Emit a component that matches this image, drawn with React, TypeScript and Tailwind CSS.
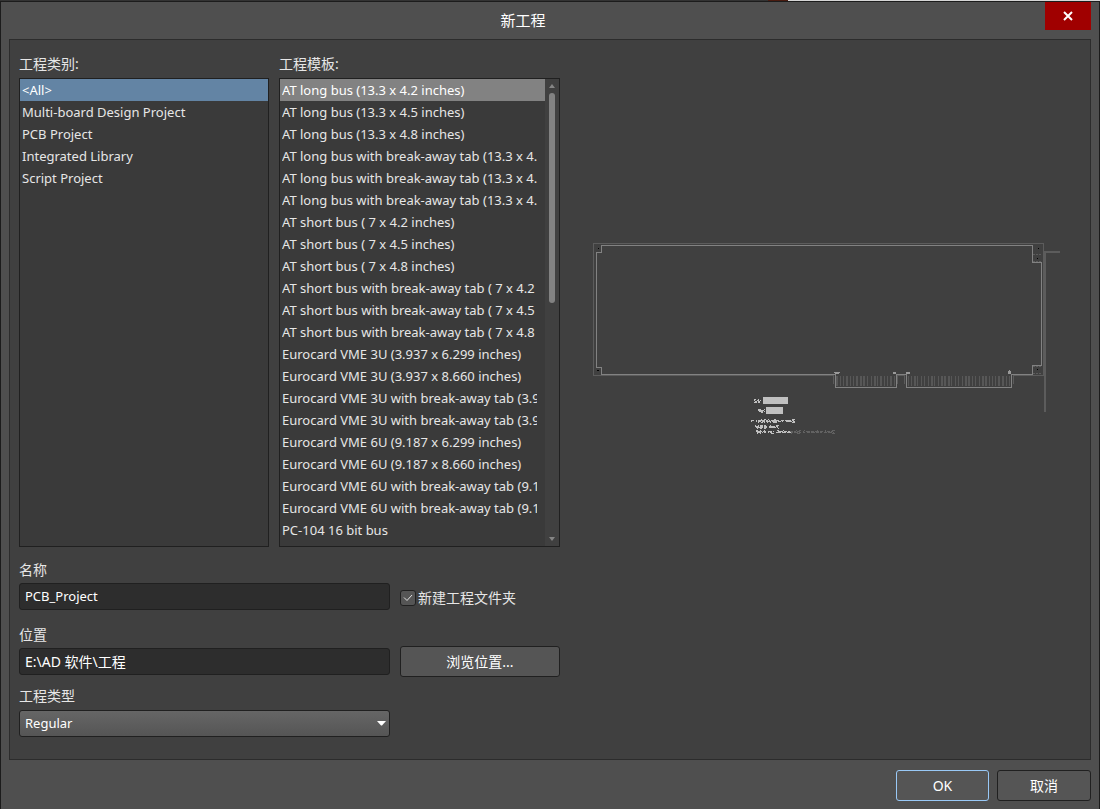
import { useState } from "react";

const CATEGORIES = [
    "<All>",
    "Multi-board Design Project",
    "PCB Project",
    "Integrated Library",
    "Script Project",
];

const TEMPLATES = [
    "AT long bus (13.3 x 4.2 inches)",
    "AT long bus (13.3 x 4.5 inches)",
    "AT long bus (13.3 x 4.8 inches)",
    "AT long bus with break-away tab (13.3 x 4.2 inches)",
    "AT long bus with break-away tab (13.3 x 4.5 inches)",
    "AT long bus with break-away tab (13.3 x 4.8 inches)",
    "AT short bus ( 7 x 4.2 inches)",
    "AT short bus ( 7 x 4.5 inches)",
    "AT short bus ( 7 x 4.8 inches)",
    "AT short bus with break-away tab ( 7 x 4.2 inches)",
    "AT short bus with break-away tab ( 7 x 4.5 inches)",
    "AT short bus with break-away tab ( 7 x 4.8 inches)",
    "Eurocard VME 3U (3.937 x 6.299 inches)",
    "Eurocard VME 3U (3.937 x 8.660 inches)",
    "Eurocard VME 3U with break-away tab (3.937 x 6.299 inches)",
    "Eurocard VME 3U with break-away tab (3.937 x 8.660 inches)",
    "Eurocard VME 6U (9.187 x 6.299 inches)",
    "Eurocard VME 6U (9.187 x 8.660 inches)",
    "Eurocard VME 6U with break-away tab (9.187 x 6.299 inches)",
    "Eurocard VME 6U with break-away tab (9.187 x 8.660 inches)",
    "PC-104 16 bit bus",
];

// [x, width] of every edge connector pin
const PINS = [
    [243, 2], [247, 1], [250, 1], [253, 2], [257, 1], [260, 1], [263, 2], [267, 2],
    [270, 2], [274, 1], [278, 1], [281, 2], [284, 1], [287, 2], [291, 1], [294, 1],
    [297, 2], [301, 1],
    [315, 1], [318, 1], [321, 2], [324, 1], [328, 1], [331, 1], [335, 1], [338, 2],
    [341, 1], [345, 1], [348, 2], [351, 2], [355, 2], [358, 1], [362, 1], [365, 1],
    [369, 1], [372, 2], [375, 2], [379, 1], [382, 1], [386, 1], [389, 2], [392, 2],
    [396, 1], [399, 1], [402, 1], [405, 2], [409, 2], [413, 1], [416, 1],
];

interface IListProps {
    label: string;
    items: string[];
    selected: string;
    selectedClass: string;
    onSelect: (item: string) => void;
}

function List({ label, items, selected, selectedClass, onSelect }: IListProps) {
    return (
        <ul aria-label={label} className="flex-1 min-w-0 overflow-hidden pb-[5px]">
            {items.map((item) => (
                <li key={item}>
                    <button
                        type="button"
                        onClick={() => onSelect(item)}
                        className={`block w-full h-[22px] pl-[2px] pr-2 text-left text-[13px] leading-[22px] ${
                            item === selected ? selectedClass : "text-[#e6e6e6]"
                        }`}
                    >
                        <span className="block whitespace-nowrap overflow-hidden">
                            {item}
                        </span>
                    </button>
                </li>
            ))}
        </ul>
    );
}

function BoardPreview() {
    return (
        <svg
            viewBox="0 0 468 192"
            className="w-[468px] max-w-full"
            fill="none"
            shapeRendering="crispEdges"
            aria-label="PCB"
        >
            <g stroke="#5c5c5c">
                <path d="M240.5 141V132.5H0.5V0.5H450.5V132.5H420.5V141M304.5 141V132.5H311.5V141" />
                <path d="M452 9V169M451 9H467" strokeWidth="2" />
                <path
                    d="M440 11.5H449M440 18.5H449M440 123.5H449M440 130.5H449"
                    strokeDasharray="2 1"
                />
            </g>
            {PINS.map(([x, width]) => (
                <rect key={x} x={x} y="133" width={width} height="10" fill="#575757" />
            ))}
            <path
                stroke="#828282"
                d="M8.5 2.5H439.5V19.5H448.5V122.5H439.5V131.5H418.5V144.5H313.5V131.5H303.5V144.5H242.5V131.5H8.5V124.5H3.5V9.5H8.5Z"
            />
            <g fill="#000">
                <rect x="5" y="5" width="1" height="1" />
                <rect x="4" y="127" width="2" height="1" />
                <rect x="445" y="5" width="1" height="1" />
                <rect x="444" y="15" width="1" height="1" />
                <rect x="444" y="126" width="1" height="1" />
            </g>
            <g fill="#999">
                <path d="M241 129h6v1h-1v1h-4v-1h-1zM300 129h3v2h-3zM313 129h4v2h-4zM415 128h1v-1h1v1h1v3h-3z" />
            </g>
            <g fill="#c0c0c0">
                <rect x="170" y="154" width="25" height="7" />
                <rect x="173" y="164" width="17" height="7" />
            </g>
            <g stroke="#c0c0c0">
                <path d="M161 156.5h2m2 0h1M161 157.5h1m2 0h2m1 0h1M162 158.5h2m1 0h2M161 159.5h3m1 0h2" />
                <path d="M165 166.5h3m3 0h1M165 167.5h6M166 168.5h4m1 0h1M168 169.5h2" />
                <path d="M168 176.5h1m2 0h2m2 0h1m5 0h2m16 0h3" />
                <path d="M158 177.5h3m2 0h1m1 0h7m1 0h2m1 0h1m1 0h8m2 0h3m1 0h6m1 0h2" />
                <path d="M158 178.5h1m4 0h1m1 0h3m1 0h3m1 0h5m1 0h5m1 0h3m1 0h1m3 0h6m1 0h2" />
                <path d="M165 179.5h1m2 0h2m1 0h1m2 0h1m2 0h1m2 0h4m15 0h3" />
                <path d="M162 182.5h1m2 0h1m1 0h3m1 0h2m4 0h1m5 0h3" />
                <path d="M162 183.5h4m1 0h3m1 0h3m2 0h6m1 0h2M163 184.5h7m1 0h3m2 0h7m1 0h1M164 185.5h1m2 0h2m2 0h2m12 0h1" />
                <path d="M163 187.5h2m2 0h1m3 0h1m12 0h2m4 0h1" />
                <path d="M163 188.5h6m1 0h3m2 0h4m1 0h1m4 0h5m1 0h3m1 0h3" />
                <path d="M164 189.5h4m1 0h1m1 0h2m2 0h1m1 0h2m4 0h5m1 0h4m1 0h4M164 190.5h1m2 0h1m10 0h3" />
            </g>
            <g stroke="#626262">
                <path d="M203 187.5h1m2 0h2m3 0h1m12 0h1m7 0h1m6 0h3" />
                <path d="M197 188.5h3m1 0h2m1 0h3m3 0h1m2 0h4m1 0h3m1 0h4m1 0h3m2 0h1m1 0h3m1 0h2" />
                <path d="M198 189.5h2m1 0h4m1 0h2m2 0h2m2 0h3m1 0h4m1 0h3m1 0h2m2 0h3m1 0h4m1 0h1" />
                <path d="M198 190.5h1m5 0h3m32 0h3" />
            </g>
        </svg>
    );
}

export default function App() {
    const [category, setCategory] = useState(CATEGORIES[0]);
    const [template, setTemplate] = useState(TEMPLATES[0]);
    const [name, setName] = useState("PCB_Project");
    const [location, setLocation] = useState("E:\\AD 软件\\工程");
    const [createFolder, setCreateFolder] = useState(true);

    const field =
        "w-full h-[27px] px-[5px] pb-[2px] rounded-[3px] border border-[#202020] bg-[#2d2d2d] text-white outline-none";
    const button =
        "h-[31px] rounded-[3px] border bg-[#555555] text-sm text-white";

    return (
        <div className="min-h-screen flex flex-col bg-[#4f4f4f] text-[#e6e6e6] text-[14px] leading-5 font-['Noto_Sans','Noto_Sans_CJK_SC',sans-serif]">
            <div className="h-px flex bg-[#333333]">
                <div className="ml-auto w-[20px] bg-[#4a1c10]" />
                <div className="w-[312px] bg-[#d6d6d6]" />
            </div>
            <div className="flex-1 flex flex-col border-t border-x border-[#1c1c1c]">
                <header className="flex items-start h-[37px] pr-2">
                    <h1 className="flex-1 pt-2 text-center text-[15px] text-white">新工程</h1>
                    <button
                        type="button"
                        aria-label="关闭"
                        className="w-[46px] h-7 flex items-center justify-center bg-[#a00000]"
                    >
                        <svg width="10" height="10" viewBox="0 0 10 10" stroke="#fff" strokeWidth="2">
                            <path d="M1 1L9 9M9 1L1 9" />
                        </svg>
                    </button>
                </header>

                <main className="flex mx-2 pt-[14px] pb-[22px] pl-[9px] border border-[#2c2c2c] bg-[#404040]">
                    <div className="w-[541px] shrink-0">
                        <div className="grid grid-cols-[250px_1fr] gap-x-[10px]">
                            <section>
                                <h2>工程类别:</h2>
                                <div className="mt-1 flex h-[469px] border border-[#202020] bg-[#3a3a3a]">
                                    <List
                                        label="工程类别"
                                        items={CATEGORIES}
                                        selected={category}
                                        selectedClass="bg-[#6384a4] text-white"
                                        onSelect={setCategory}
                                    />
                                </div>
                            </section>
                            <section className="min-w-0">
                                <h2>工程模板:</h2>
                                <div className="mt-1 flex border border-[#202020] bg-[#3a3a3a]">
                                    <List
                                        label="工程模板"
                                        items={TEMPLATES}
                                        selected={template}
                                        selectedClass="bg-[#828282] text-white"
                                        onSelect={setTemplate}
                                    />
                                    <div className="w-[14px] flex flex-col items-center bg-[#404040] py-[5px]">
                                        <svg width="6" height="4" viewBox="0 0 6 4" fill="#858585">
                                            <path d="M0 4L3 0L6 4Z" />
                                        </svg>
                                        <div className="mt-[5px] w-[6px] h-[210px] rounded-full bg-[#828282]" />
                                        <svg className="mt-auto" width="6" height="4" viewBox="0 0 6 4" fill="#858585">
                                            <path d="M0 0L3 4L6 0Z" />
                                        </svg>
                                    </div>
                                </div>
                            </section>
                        </div>

                        <div className="mt-[13px] grid grid-cols-[371px_1fr] gap-x-[10px] items-end">
                            <div>
                                <label htmlFor="name" className="block mb-[3px]">名称</label>
                                <input
                                    id="name"
                                    className={`${field} text-[13px]`}
                                    value={name}
                                    onChange={(e) => setName(e.target.value)}
                                />
                            </div>
                            <label className="flex items-center gap-[2px] mb-[2px]">
                                <span className="relative flex w-4 h-4">
                                    <input
                                        type="checkbox"
                                        checked={createFolder}
                                        onChange={(e) => setCreateFolder(e.target.checked)}
                                        className="appearance-none w-4 h-4 rounded-[3px] border border-[#202020] bg-[#555555]"
                                    />
                                    {createFolder && (
                                        <svg
                                            className="absolute inset-0 pointer-events-none"
                                            width="16"
                                            height="16"
                                            viewBox="0 0 16 16"
                                            fill="none"
                                            stroke="#e0e0e0"
                                        >
                                            <path d="M4 7.5L7 10.5L12 5" />
                                        </svg>
                                    )}
                                </span>
                                新建工程文件夹
                            </label>
                        </div>

                        <div className="mt-[15px] grid grid-cols-[371px_1fr] gap-x-[10px] items-end">
                            <div>
                                <label htmlFor="location" className="block mb-[3px]">位置</label>
                                <input
                                    id="location"
                                    className={`${field} text-sm`}
                                    value={location}
                                    onChange={(e) => setLocation(e.target.value)}
                                />
                            </div>
                            <button type="button" className={`${button} border-[#202020] -mb-[2px]`}>
                                浏览位置...
                            </button>
                        </div>

                        <div className="mt-[11px] w-[371px]">
                            <label htmlFor="type" className="block mb-1">工程类型</label>
                            <div className="relative">
                                <select
                                    id="type"
                                    className="appearance-none block w-full h-[27px] px-[5px] pb-[2px] rounded-[3px] border border-[#202020] bg-linear-to-b from-[#666666] to-[#555555] text-[13px] text-white"
                                >
                                    <option>Regular</option>
                                </select>
                                <svg
                                    className="absolute right-1 top-[11px] pointer-events-none"
                                    width="9"
                                    height="5"
                                    viewBox="0 0 9 5"
                                    fill="#fff"
                                >
                                    <path d="M0 0H9L5 4.5H4Z" />
                                </svg>
                            </div>
                        </div>
                    </div>

                    <div className="flex-1 min-w-0 pl-[33px] pt-[189px]">
                        <BoardPreview />
                    </div>
                </main>

                <footer className="flex justify-end gap-2 pt-[10px] pb-2 px-2">
                    <button type="button" className={`${button} w-[93px] border-[#99c9f7]`}>
                        OK
                    </button>
                    <button type="button" className={`${button} w-[94px] border-[#202020]`}>
                        取消
                    </button>
                </footer>
            </div>
        </div>
    );
}
